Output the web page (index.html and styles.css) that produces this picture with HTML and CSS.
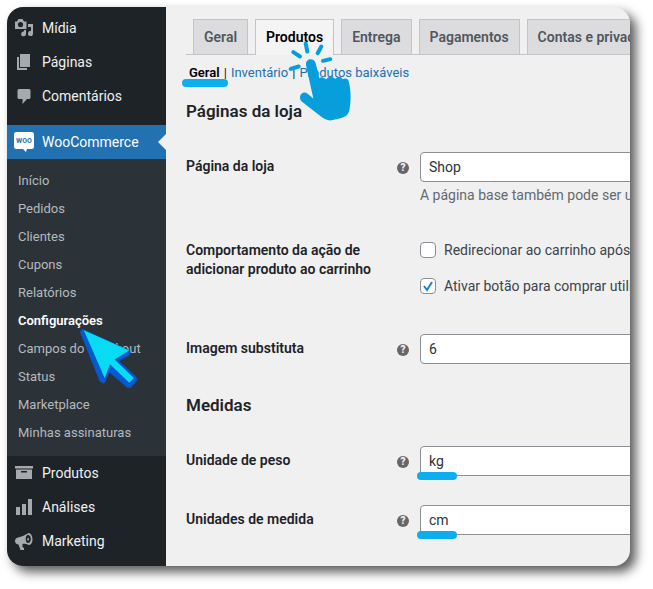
FILE: index.html
```html
<!DOCTYPE html>
<html lang="pt-BR">
<head>
    <meta charset="UTF-8">
    <meta name="viewport" content="width=device-width, initial-scale=1.0">
    <title>WooCommerce - Configurações</title>
    <link rel="stylesheet" href="styles.css">
</head>
<body>
    <div class="frame">
        <nav class="sidebar">
            <a class="menu-item" href="#">
                <svg class="menu-icon" viewBox="0 0 20 20"><path fill-rule="evenodd" d="M1 3.500h2L4.500 1h4L10 3.500h2.500V11H1zM6.500 4a2.600 2.600 0 1 0 0 5.200 2.600 2.600 0 0 0 0-5.200z"/><path d="M14 6h5v9.500a2.500 2.500 0 1 1-2-2.400V9h-3zM10 12h2v4a2.400 2.400 0 1 1-2-2.400z"/></svg>
                Mídia
            </a>
            <a class="menu-item" href="#">
                <svg class="menu-icon" viewBox="0 0 20 20"><path d="M6 2h10v13H6zM3 5h2v11h8v2H3z"/></svg>
                Páginas
            </a>
            <a class="menu-item" href="#">
                <svg class="menu-icon" viewBox="0 0 20 20"><path d="M5 3h10q1.500 0 1.500 1.500v7q0 1.500-1.500 1.500h-2l-4.500 5V13H5q-1.500 0-1.500-1.500v-7Q3.500 3 5 3z"/></svg>
                Comentários
            </a>
            <a class="menu-item current" href="#">
                <svg class="menu-icon" viewBox="0 0 20 20"><path d="M2.500 0h15Q20 0 20 2.500v12q0 2.500-2.500 2.500H13l-1 3-3-3H2.500Q0 17 0 14.500v-12Q0 0 2.500 0z"/><text class="woo" x="10" y="11" text-anchor="middle">WOO</text></svg>
                WooCommerce
            </a>
            <div class="submenu">
                <a href="#">Início</a>
                <a href="#">Pedidos</a>
                <a href="#">Clientes</a>
                <a href="#">Cupons</a>
                <a href="#">Relatórios</a>
                <a class="active" href="#">Configurações</a>
                <a href="#">Campos do checkout</a>
                <a href="#">Status</a>
                <a href="#">Marketplace</a>
                <a href="#">Minhas assinaturas</a>
                <svg class="arrow" viewBox="240 80 180 190">
                    <path class="arrow-side" d="M247 87L240 94L300 244L312 250L328 216L382 262L392 263L412 240L408 230L356 183L390 164L390 152Z"/>
                    <path class="arrow-top" d="M251 90L388 151L344 178L402 234L388 248L330 192L314 234Z"/>
                </svg>
            </div>
            <a class="menu-item" href="#">
                <svg class="menu-icon" viewBox="0 0 20 20"><path fill-rule="evenodd" d="M1 3h18v2.500H1zM2 6.500h16V16H2zM7 8v1.500h6V8z"/></svg>
                Produtos
            </a>
            <a class="menu-item" href="#">
                <svg class="menu-icon" viewBox="0 0 20 20"><path d="M2 10h4v8H2zM8 7h4v11H8zM14 2h4v16h-4z"/></svg>
                Análises
            </a>
            <a class="menu-item" href="#">
                <svg class="menu-icon" viewBox="0 0 20 20"><path fill-rule="evenodd" d="M14.500 2C17 2 18.500 5 18.500 8.500S17 14 14.500 14c-2-1-4-1.500-6-1v3l1.500 1v2H6.500l-2-5.500C2.500 13.500 1 12 1 10s1-3 3-3.500C8 6 11 4 14.500 2zM14 4c-1.500 0-2.300 2-2.300 4s.8 4 2.300 4 2.800-1.500 2.800-4S15.500 4 14 4zM14 6.500l1.200 1.500L14 10l-1-1.500z"/></svg>
                Marketing
            </a>
        </nav>

        <main class="content">
            <nav class="tabs">
                <a class="tab" href="#">Geral</a>
                <a class="tab tab-active" href="#">Produtos</a>
                <a class="tab" href="#">Entrega</a>
                <a class="tab" href="#">Pagamentos</a>
                <a class="tab" href="#">Contas e privacidade</a>
            </nav>
            <div class="sections">
                <a class="section-active marked" href="#">Geral</a>
                <span>|</span>
                <a href="#">Inventário</a>
                <span>|</span>
                <a href="#">Produtos baixáveis</a>
            </div>

            <form>
                <h2>Páginas da loja</h2>
                <div class="row">
                    <label class="row-label" for="shop">Página da loja</label>
                    <span class="tip">?</span>
                    <div class="field">
                        <select id="shop"><option>Shop</option></select>
                        <p class="description">A página base também pode ser usada em seus links permanentes.</p>
                    </div>
                </div>
                <div class="row">
                    <span class="row-label">Comportamento da ação de adicionar produto ao carrinho</span>
                    <div class="field choices">
                        <label><input type="checkbox">Redirecionar ao carrinho após adicionar o produto</label>
                        <label><input type="checkbox" checked>Ativar botão para comprar utilizando AJAX</label>
                    </div>
                </div>
                <div class="row">
                    <label class="row-label" for="image">Imagem substituta</label>
                    <span class="tip">?</span>
                    <div class="field"><input id="image" type="text" value="6"></div>
                </div>

                <h2>Medidas</h2>
                <div class="row">
                    <label class="row-label" for="weight">Unidade de peso</label>
                    <span class="tip">?</span>
                    <div class="field marked"><select id="weight"><option>kg</option></select></div>
                </div>
                <div class="row">
                    <label class="row-label" for="size">Unidades de medida</label>
                    <span class="tip">?</span>
                    <div class="field marked"><select id="size"><option>cm</option></select></div>
                </div>
            </form>

            <svg class="hand" viewBox="330 110 210 260">
                <path class="rays" d="M392 129l5 24M439 138l-11 20M355 155l20 13M444 181l22-5M347 205l24-7"/>
                <path d="M393 194C391 172 418 171 422 188L433 233Q441 226 453 236Q466 222 481 235Q494 220 503 236Q518 230 521 243C529 271 528 303 523 331Q517 351 493 354L466 360Q449 358 435 346L381 304C366 290 382 266 398 280L415 294Z"/>
            </svg>
        </main>
    </div>
</body>
</html>
```

FILE: styles.css
```css
body {
    margin: 0;
    padding: 7px 23px 23px 7px;
    font-family: Roboto, sans-serif;
    font-size: 14px;
    color: #1d2327;
    background-color: #fff;
}
a {
    text-decoration: none;
}
.frame {
    display: flex;
    min-height: calc(100vh - 30px);
    border-radius: 16px;
    overflow: hidden;
    background-color: #f0f0f1;
    box-shadow: 6px 6px 11px rgba(0, 0, 0, 0.65);
}

/* Sidebar */
.sidebar {
    flex: 0 0 159px;
    box-sizing: border-box;
    padding: 4px 0 8px;
    background-color: #1d2327;
}
.menu-item {
    display: flex;
    align-items: center;
    gap: 8px;
    height: 34px;
    padding-left: 7px;
    color: #f0f0f1;
}
.menu-icon {
    width: 20px;
    height: 20px;
    fill: #a7aaad;
}
.current {
    position: relative;
    margin-top: 12px;
    color: #fff;
    background-color: #2271b1;
}
.current .menu-icon {
    fill: #fff;
}
.current .woo {
    fill: #2271b1;
    font-size: 7px;
    font-weight: 700;
}
.current::after {
    content: "";
    position: absolute;
    right: 0;
    top: 9px;
    border: 8px solid transparent;
    border-left-width: 0;
    border-right-color: #f0f0f1;
}
.submenu {
    position: relative;
    display: flex;
    flex-direction: column;
    padding: 8px 11px 9px;
    background-color: #2c3338;
}
.submenu a {
    font-size: 13px;
    line-height: 28px;
    white-space: nowrap;
    color: #b4b9be;
}
.submenu .active {
    font-weight: 600;
    color: #fff;
}
.arrow {
    position: absolute;
    left: 73px;
    top: 168px;
    width: 60px;
    height: 63px;
}
.arrow-side {
    fill: #0759cf;
    stroke: #0759cf;
    stroke-width: 2;
    stroke-linejoin: round;
}
.arrow-top {
    fill: #08dcf5;
}

/* Settings page */
.content {
    position: relative;
    flex: 1;
    min-width: 0;
    padding: 12px 0 0 20px;
    overflow: hidden;
    white-space: nowrap;
}
.tabs {
    display: flex;
    gap: 7px;
    padding-left: 7px;
    border-bottom: 1px solid #c3c4c7;
}
.tab {
    flex: none;
    padding: 5px 10px;
    border: 1px solid #c3c4c7;
    border-bottom: none;
    font-weight: 600;
    line-height: 24px;
    color: #50575e;
    background-color: #dcdcde;
}
.tab-active {
    margin-bottom: -1px;
    padding-bottom: 6px;
    color: #000;
    background-color: #f4f4f5;
}
.sections {
    display: flex;
    gap: 4px;
    padding: 9px 0 0 3px;
    font-size: 13px;
    line-height: 18px;
}
.sections a {
    color: #2271b1;
}
.sections .section-active {
    font-weight: 600;
    color: #000;
}
h2 {
    margin: 15px 0 14px;
    font-size: 17px;
    font-weight: 600;
    line-height: 24px;
}
.sections + form {
    padding-top: 2px;
}
.row {
    display: grid;
    grid-template-columns: 200px 12px 400px;
    column-gap: 11px;
    padding: 15px 0 14px;
}
.row-label {
    padding-top: 5px;
    font-weight: 600;
    line-height: 19px;
    white-space: normal;
}
.tip {
    width: 12px;
    height: 12px;
    margin-top: 10px;
    border-radius: 50%;
    font-size: 10px;
    font-weight: 900;
    line-height: 12px;
    text-align: center;
    color: #f0f0f1;
    background-color: #666;
}
.field {
    grid-column: 3;
}
select,
input[type="text"] {
    display: block;
    appearance: none;
    box-sizing: border-box;
    width: 100%;
    height: 30px;
    margin: 0;
    padding: 0 8px;
    border: 1px solid #8c8f94;
    border-radius: 4px;
    font: inherit;
    color: #2c3338;
    background-color: #fff;
}
.description {
    margin: 3px 0 2px;
    line-height: 20px;
    color: #646970;
}
.choices {
    display: grid;
    gap: 16px;
    padding: 4px 0 9px;
    line-height: 20px;
    color: #3c434a;
}
.choices label {
    display: flex;
    align-items: center;
    gap: 8px;
}
input[type="checkbox"] {
    appearance: none;
    box-sizing: border-box;
    width: 16px;
    height: 16px;
    margin: 0;
    border: 1px solid #8c8f94;
    border-radius: 4px;
    background-color: #fff;
}
input[type="checkbox"]:checked {
    background-image: url("data:image/svg+xml,%3Csvg xmlns='http://www.w3.org/2000/svg' viewBox='0 0 14 14'%3E%3Cpath d='M3 7l3 4 5-8' fill='none' stroke='%231e7fd0' stroke-width='2'/%3E%3C/svg%3E");
}

/* Highlighter strokes */
.marked {
    position: relative;
}
.marked::after {
    content: "";
    position: absolute;
    left: -3px;
    bottom: -4px;
    width: 40px;
    height: 8px;
    border-radius: 4px;
    background-color: #0caeef;
}
.section-active.marked::after {
    left: -7px;
    bottom: -5px;
    width: 46px;
}
.hand {
    position: absolute;
    left: 119px;
    top: 30px;
    width: 70px;
    height: 87px;
    fill: #069edb;
}
.rays {
    stroke: #069edb;
    stroke-width: 12;
    stroke-linecap: round;
}
```
